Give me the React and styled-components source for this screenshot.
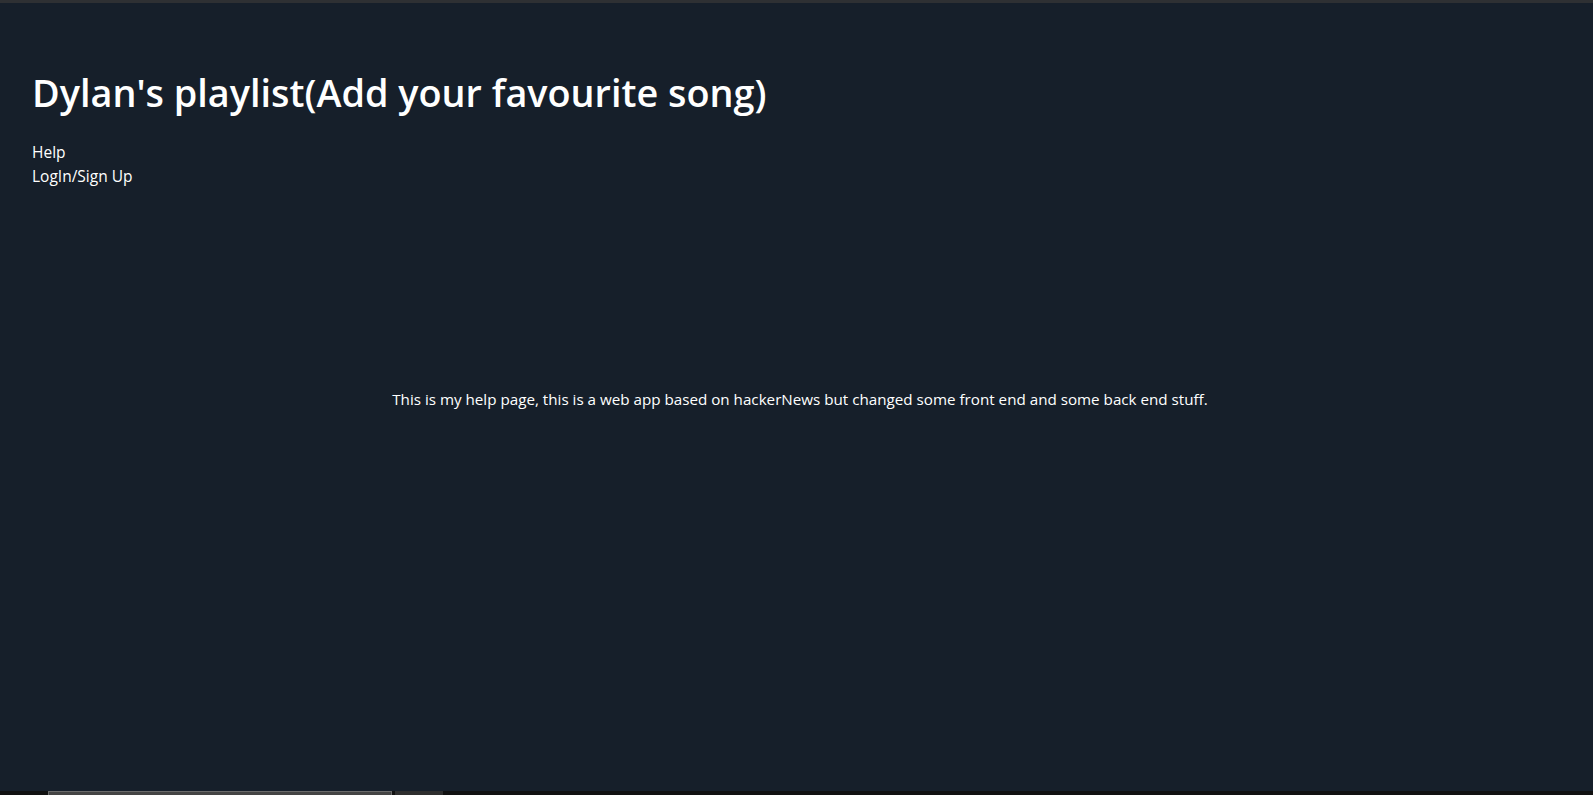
import styled, { createGlobalStyle } from "styled-components";

const GlobalStyle = createGlobalStyle`
  html, body {
    margin: 0;
    padding: 0;
    background-color: #161f2a;
  }
  body {
    font-family: "Open Sans", "Noto Sans", sans-serif;
    color: #ffffff;
  }
`;

export default function App() {
  return (
    <>
      <GlobalStyle />
      <StyledPage>
        <StyledTopEdge />
        <StyledMain>
          <StyledTitle>Dylan's playlist(Add your favourite song)</StyledTitle>
          <StyledNav>
            <StyledNavLink href="#help">Help</StyledNavLink>
            <StyledNavLink href="#login">LogIn/Sign Up</StyledNavLink>
          </StyledNav>
          <StyledHelpText>
            This is my help page, this is a web app based on hackerNews but
            changed some front end and some back end stuff.
          </StyledHelpText>
        </StyledMain>
        <StyledScrollbar>
          <StyledThumb />
          <StyledTrackBlock />
        </StyledScrollbar>
      </StyledPage>
    </>
  );
}

const StyledPage = styled.div`
  min-height: 795px;
  display: flex;
  flex-direction: column;
`;
const StyledTopEdge = styled.div`
  height: 3px;
  background-color: #2e3033;
`;
const StyledMain = styled.main`
  flex: 1;
  padding: 0 32px;
`;
const StyledTitle = styled.h1`
  margin: 68px 0 0;
  font-size: 37.8px;
  line-height: 44px;
  font-weight: 600;
`;
const StyledNav = styled.nav`
  display: flex;
  flex-direction: column;
  align-items: flex-start;
  margin-top: 25px;
`;
const StyledNavLink = styled.a`
  color: #ffffff;
  text-decoration: none;
  font-size: 15.5px;
  line-height: 24px;
`;
const StyledHelpText = styled.p`
  margin: 199px 0 0;
  padding-left: 7px;
  text-align: center;
  font-size: 15.2px;
  line-height: 24px;
`;
const StyledScrollbar = styled.div`
  height: 4px;
  display: flex;
  gap: 3px;
  padding-left: 48px;
  background-color: #111111;
`;
const StyledThumb = styled.div`
  width: 344px;
  box-sizing: border-box;
  border: 1px solid #6a6a6a;
  border-bottom: none;
  background-color: #444444;
`;
const StyledTrackBlock = styled.div`
  width: 48px;
  background-color: #2e2e2e;
`;
